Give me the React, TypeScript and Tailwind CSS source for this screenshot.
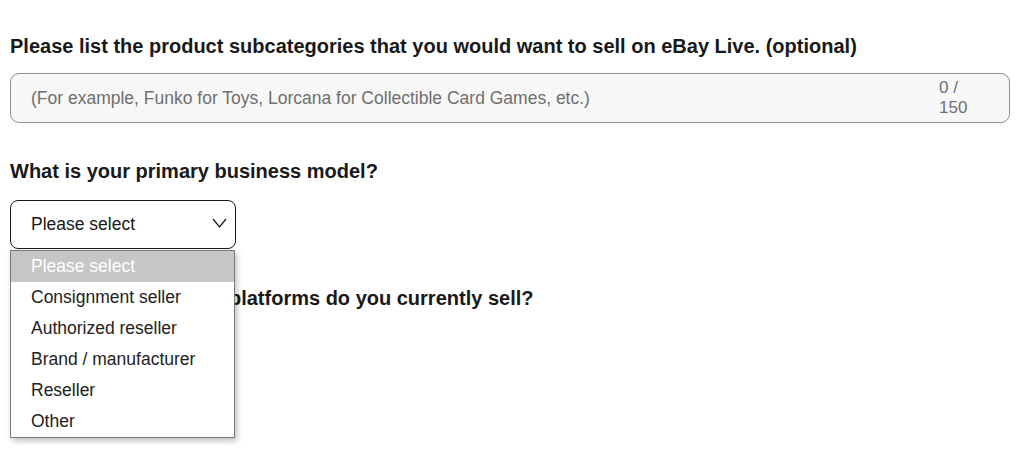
const options = [
  "Please select",
  "Consignment seller",
  "Authorized reseller",
  "Brand / manufacturer",
  "Reseller",
  "Other",
];

export default function App() {
  return (
    <div className="w-[1017px] h-[459px] bg-white px-[10px] text-[#191919] font-['Liberation_Sans',Arial,sans-serif]">
      <h2 className="pt-[34px] text-[20px] leading-[24px] font-bold">
        Please list the product subcategories that you would want to sell on eBay Live. (optional)
      </h2>

      <div className="mt-[15px] h-[50px] w-[1000px] rounded-[9px] border border-[#8f8f8f] bg-[#f7f7f7] flex items-center pl-[20px] pr-[41px]">
        <span className="flex-1 text-[17.5px] text-[#6f6f6f]">
          (For example, Funko for Toys, Lorcana for Collectible Card Games, etc.)
        </span>
        <span className="w-[29px] text-[17px] leading-[20px] text-[#6f6f6f]">
          0 /<br />150
        </span>
      </div>

      <h2 className="mt-[36px] text-[20px] leading-[24px] font-bold">
        What is your primary business model?
      </h2>

      <div className="relative mt-[17px] w-[226px]">
        <div className="h-[49px] rounded-[8px] border-[1.5px] border-[#191919] flex items-center justify-between pl-[20px] pr-[8px] text-[17.5px]">
          <span>Please select</span>
          <svg width="15" height="10" viewBox="0 0 15 10" fill="none" className="-mt-[4px]">
            <path d="M1 1l6.5 8L14 1" stroke="#191919" strokeWidth="1.2" />
          </svg>
        </div>

        <ul className="absolute left-0 top-[50px] w-[225px] border border-[#7a7a7a] bg-white shadow-[2px_3px_6px_rgba(0,0,0,0.25)] z-10">
          {options.map((o, i) => (
            <li
              key={o}
              className={
                i === 0
                  ? "h-[31px] flex items-center pl-[20px] text-[17.5px] bg-[#c6c6c6] text-white"
                  : "h-[31px] flex items-center pl-[20px] text-[17.5px] text-[#222]"
              }
            >
              {o}
            </li>
          ))}
        </ul>
      </div>

      <h2 className="mt-[37px] text-[20px] leading-[24px] font-bold">
        On which e-commerce platforms do you currently sell?
      </h2>
    </div>
  );
}
